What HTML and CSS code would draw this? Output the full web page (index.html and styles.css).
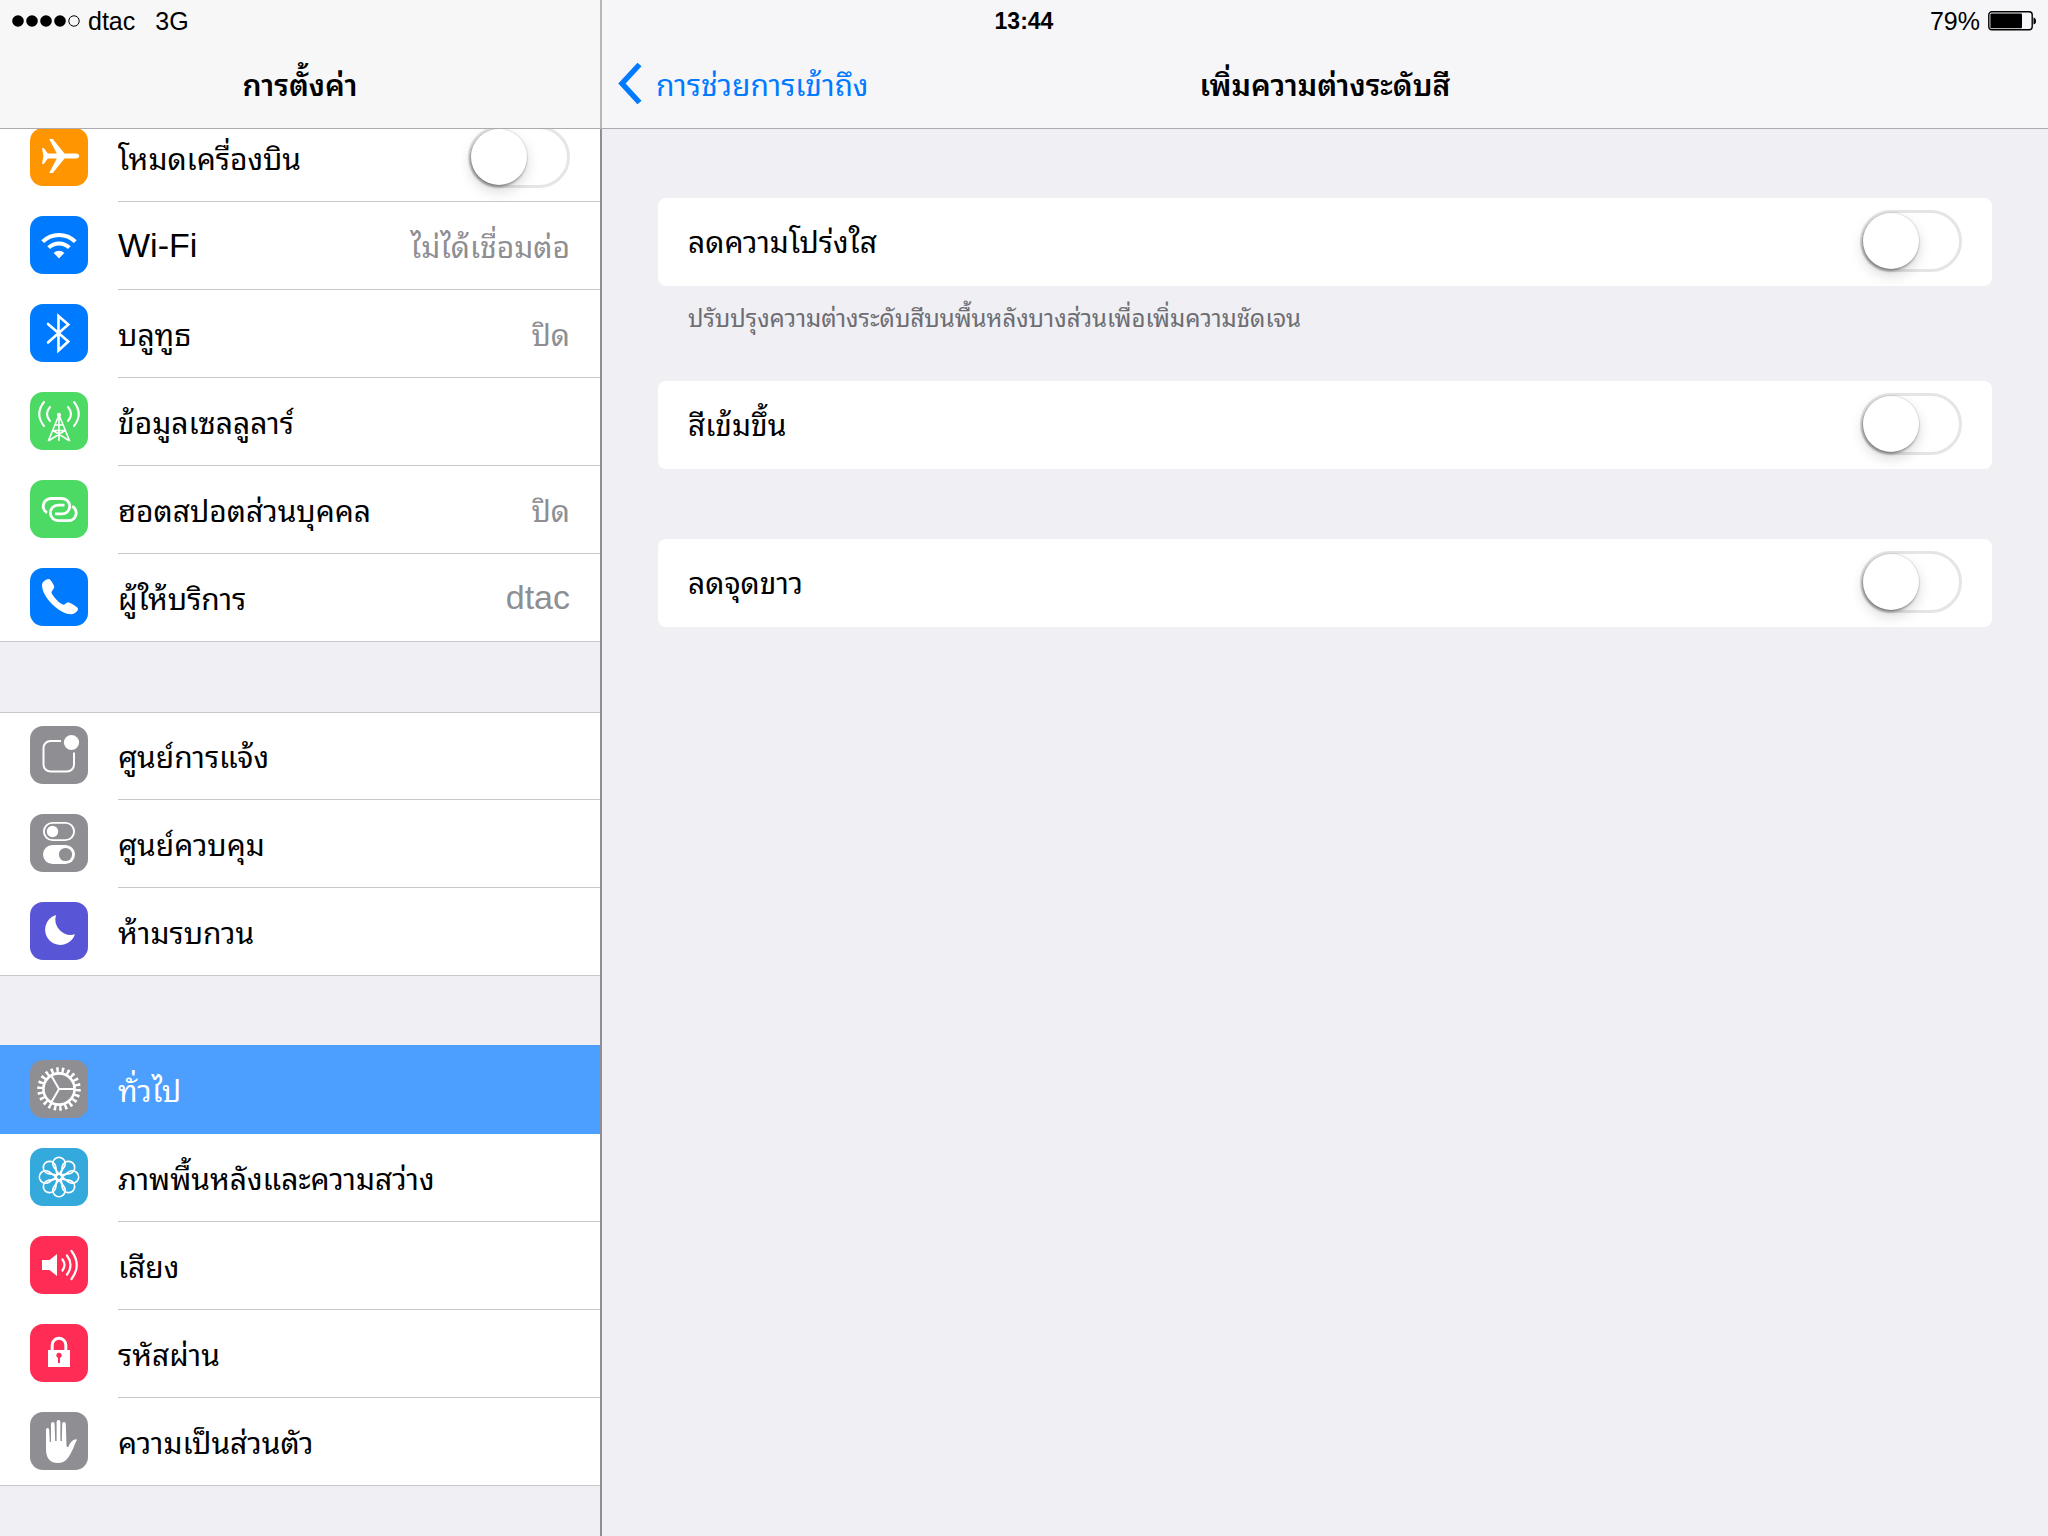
FILE: index.html
```
<!DOCTYPE html>
<html lang="th">
<head>
<meta charset="utf-8">
<meta name="viewport" content="width=device-width, initial-scale=1">
<title>การตั้งค่า</title>
<link rel="stylesheet" href="styles.css">
</head>
<body>
<div class="screen">
  <div class="status">
    <div class="status-left">
      <svg class="signal" width="68" height="12" viewBox="0 0 68 12" aria-hidden="true"><circle cx="6" cy="6" r="5.8"/><circle cx="20" cy="6" r="5.8"/><circle cx="34" cy="6" r="5.8"/><circle cx="48" cy="6" r="5.8"/><circle cx="62" cy="6" r="5.2" fill="none" stroke="#000"/></svg>
      <span>dtac</span>
      <span class="network">3G</span>
    </div>
    <time class="clock">13:44</time>
    <div class="status-right">
      <span>79%</span>
      <svg width="48" height="20" viewBox="0 0 48 20" aria-hidden="true"><rect x=".8" y=".8" width="43.400" height="18" rx="3" fill="none" stroke="#000" stroke-width="1.400"/><rect x="2.400" y="2.400" width="31.600" height="14.800" rx="1"/><path d="M45.500 6.500q2.500.500 2.500 3.500t-2.500 3.500z"/></svg>
    </div>
  </div>

  <nav class="sidebar">
    <header class="bar sidebar-bar"><h1 class="title">การตั้งค่า</h1></header>
    <div class="list">
      <ul class="group">
        <li><label class="row">
          <svg class="icon orange" viewBox="0 0 58 58"><path d="M12 20h1.800l4 5.400h9L19.200 11h3.600L34.500 25.400H46q3.200.400 3.200 2.600T46 30.600H34.500L22.800 45h-3.600l7.600-14.400h-9l-4 5.400H12l1.400-8z"/></svg>
          <span class="cell"><span class="label">โหมดเครื่องบิน</span><input class="switch" type="checkbox" role="switch"></span>
        </label></li>
        <li><a class="row" href="#wifi">
          <svg class="icon blue" viewBox="0 0 58 58"><path class="line" stroke-width="4" d="M12.700 25.700a23 23 0 0 1 32.600 0M18.700 31.700a14.500 14.500 0 0 1 20.600 0"/><path d="M23.700 36.900a7.500 7.500 0 0 1 10.600 0L29 42.400z"/></svg>
          <span class="cell"><span class="label latin">Wi-Fi</span><span class="value">ไม่ได้เชื่อมต่อ</span></span>
        </a></li>
        <li><a class="row" href="#bluetooth">
          <svg class="icon blue" viewBox="0 0 58 58"><path class="line round" stroke-width="2.600" d="M18 20l20.300 17.500-9.800 9V12l9.800 8.500L18 38.500"/></svg>
          <span class="cell"><span class="label">บลูทูธ</span><span class="value">ปิด</span></span>
        </a></li>
        <li><a class="row" href="#cellular">
          <svg class="icon green" viewBox="0 0 58 58"><g class="line round" stroke-width="1.600"><path d="M29 23L18.500 48.500M29 23l10.500 25.500M29 23v25.500M25.500 33h7M23 38.500l16 10M35 38.500l-16 10M23 38.500h12"/><path stroke-width="2.100" d="M20 15q-6 7 0 14M38 15q6 7 0 14M14 10q-9.500 12 0 24M44 10q9.500 12 0 24"/></g><circle cx="29" cy="22.800" r="2.100"/></svg>
          <span class="cell"><span class="label">ข้อมูลเซลลูลาร์</span></span>
        </a></li>
        <li><a class="row" href="#hotspot">
          <svg class="icon green" viewBox="0 0 58 58"><path class="line" stroke-width="2.800" d="M17 32.800C10.500 28.500 13 18.500 21.500 18.500H32a7.700 7.700 0 0 1 0 15.400h-7M34.500 25.200H28a7.700 7.700 0 0 0 0 15.400h10c8.500 0 11-10 4.300-14.300"/></svg>
          <span class="cell"><span class="label">ฮอตสปอตส่วนบุคคล</span><span class="value">ปิด</span></span>
        </a></li>
        <li><a class="row" href="#carrier">
          <svg class="icon blue" viewBox="0 0 58 58"><path d="M12 17c0-3 4-6 7-6 1.500 0 5 6 5.300 7.700.2 1.300-2.800 4.500-2.800 5.800.5 3.500 9 12 12 12.300 1.200.1 3-2.500 4.500-2.600 1.500 0 9.500 4.500 10 6.300.3 2.500-3.500 5.800-7 5.700C29 46 12 29 12 17z"/></svg>
          <span class="cell"><span class="label">ผู้ให้บริการ</span><span class="value latin">dtac</span></span>
        </a></li>
      </ul>
      <ul class="group">
        <li><a class="row" href="#notifications">
          <svg class="icon gray" viewBox="0 0 58 58"><path class="line" stroke-width="2" d="M31 15H20.500a7 7 0 0 0-7 7v16.500a7 7 0 0 0 7 7H37a7 7 0 0 0 7-7v-12"/><circle cx="41.500" cy="16.500" r="7.600"/></svg>
          <span class="cell"><span class="label">ศูนย์การแจ้ง</span></span>
        </a></li>
        <li><a class="row" href="#control">
          <svg class="icon gray" viewBox="0 0 58 58"><rect class="line" stroke-width="1.900" x="13.900" y="8.900" width="30.200" height="17.200" rx="8.600"/><circle cx="22.500" cy="17.500" r="5.700"/><rect x="13" y="31" width="32" height="19" rx="9.500"/><circle class="hole" cx="35.500" cy="40.500" r="6.600"/></svg>
          <span class="cell"><span class="label">ศูนย์ควบคุม</span></span>
        </a></li>
        <li><a class="row" href="#dnd">
          <svg class="icon purple" viewBox="0 0 58 58"><path d="M26 13a15.300 15.300 0 1 0 19 19.300A15.500 15.500 0 0 1 26 13z"/></svg>
          <span class="cell"><span class="label">ห้ามรบกวน</span></span>
        </a></li>
      </ul>
      <ul class="group">
        <li><a class="row selected" href="#general" aria-current="page">
          <svg class="icon gray" viewBox="0 0 58 58"><g class="line"><circle cx="29" cy="29" r="15.600" stroke-width="2.600"/><circle cx="29" cy="29" r="19" stroke-width="5.600" pathLength="44" stroke-dasharray=".9 1.100"/><path stroke-width="2" d="M29 29h15M29 29l-7.500-13M29 29l-7.500 13"/></g></svg>
          <span class="cell"><span class="label">ทั่วไป</span></span>
        </a></li>
        <li><a class="row" href="#wallpaper">
          <svg class="icon sky" viewBox="0 0 58 58"><defs><path id="petal" d="M29 26.200L23.800 19A6.200 6.200 0 1 1 34.200 19z"/></defs><g class="line" stroke-width="1.700"><use href="#petal"/><use href="#petal" transform="rotate(45 29 29)"/><use href="#petal" transform="rotate(90 29 29)"/><use href="#petal" transform="rotate(135 29 29)"/><use href="#petal" transform="rotate(180 29 29)"/><use href="#petal" transform="rotate(225 29 29)"/><use href="#petal" transform="rotate(270 29 29)"/><use href="#petal" transform="rotate(315 29 29)"/><circle cx="29" cy="29" r="3.200"/></g></svg>
          <span class="cell"><span class="label">ภาพพื้นหลังและความสว่าง</span></span>
        </a></li>
        <li><a class="row" href="#sounds">
          <svg class="icon red" viewBox="0 0 58 58"><path d="M12 24h7.500l7.500-6v22l-7.500-6H12z"/><path class="line round" stroke-width="2.200" d="M32.500 23.500q4 5.500 0 11M37 19.500q7 9.500 0 19M41.500 15q10.500 14 0 28"/></svg>
          <span class="cell"><span class="label">เสียง</span></span>
        </a></li>
        <li><a class="row" href="#passcode">
          <svg class="icon red" viewBox="0 0 58 58"><path class="line" stroke-width="3" d="M22.200 27v-6a6.800 6.800 0 0 1 13.600 0v6"/><path d="M18 26h22v17H18z"/><g class="hole"><circle cx="29" cy="31.300" r="2.600"/><path d="M28 32h2v7h-2z"/></g></svg>
          <span class="cell"><span class="label">รหัสผ่าน</span></span>
        </a></li>
        <li><a class="row" href="#privacy">
          <svg class="icon gray" viewBox="0 0 58 58"><path d="M16 18q0-2 1.600-2t1.600 2l.6 12h1.200V12q0-2 1.800-2t1.800 2l.6 17h1.400V10q0-2 1.900-2t1.900 2v19h1.400l.4-17q0-2 1.800-2t1.800 2l.7 22q.5 2 2 .5 2-5 5-6.500 2.500-1.500 3.500-.3-2 3.800-4 9C39 45 36 51 28 51q-11.500 0-12-13z"/></svg>
          <span class="cell"><span class="label">ความเป็นส่วนตัว</span></span>
        </a></li>
      </ul>
    </div>
  </nav>

  <main class="detail">
    <header class="bar detail-bar">
      <a class="back" href="#accessibility"><svg width="26" height="42" viewBox="0 0 26 42" aria-hidden="true"><path d="M23.500 2.500L6 21.500l17.500 19" fill="none" stroke="#007aff" stroke-width="5.500"/></svg>การช่วยการเข้าถึง</a>
      <h2 class="title">เพิ่มความต่างระดับสี</h2>
    </header>
    <form class="settings">
      <section>
        <label class="card"><span class="label">ลดความโปร่งใส</span><input class="switch" type="checkbox" role="switch"></label>
        <p class="note">ปรับปรุงความต่างระดับสีบนพื้นหลังบางส่วนเพื่อเพิ่มความชัดเจน</p>
      </section>
      <label class="card"><span class="label">สีเข้มขึ้น</span><input class="switch" type="checkbox" role="switch"></label>
      <label class="card spaced"><span class="label">ลดจุดขาว</span><input class="switch" type="checkbox" role="switch"></label>
    </form>
  </main>
</div>
</body>
</html>
```
FILE: styles.css
```
* { box-sizing: border-box; }

body {
  margin: 0;
  background: #efeff4;
  color: #000;
  font-family: "Noto Sans Thai Looped", "Liberation Sans", sans-serif;
  font-size: 30px;
}

a { color: inherit; text-decoration: none; }
ul { list-style: none; margin: 0; padding: 0; }

/* Two panes with the status bar laid over both headers */
.screen {
  display: grid;
  grid-template-columns: minmax(320px, 602px) 1fr;
  grid-template-rows: 42px 1fr;
  min-height: 100vh;
}

.status {
  grid-area: 1 / 1 / 2 / 3;
  z-index: 2;
  display: grid;
  grid-template-columns: 1fr auto 1fr;
  align-items: center;
  padding: 0 12px;
  font: 25px/42px "Liberation Sans", Arial, sans-serif;
}
.status-left, .status-right { display: flex; align-items: center; gap: 8px; }
.status-right { justify-content: flex-end; }
.network { margin-left: 12px; }
.clock { font-size: 23px; font-weight: bold; }

.sidebar, .detail { grid-row: 1 / 3; display: flex; flex-direction: column; min-width: 0; }
.sidebar { grid-column: 1; }
.detail { grid-column: 2; }

.bar {
  height: 129px;
  padding-top: 40px;
  padding-bottom: 2px;
  border-bottom: 1px solid #acacb0;
  display: grid;
  align-items: center;
}
.sidebar-bar { background: #f7f7f7; border-right: 2px solid #b8b8bb; }
.detail-bar { background: #f6f6f8; grid-template-columns: 1fr auto 1fr; padding-left: 14px; padding-right: 14px; }
.title { margin: 0; font-size: 30px; line-height: 56px; font-weight: 600; text-align: center; }
.back { display: flex; align-items: center; gap: 14px; color: #007aff; line-height: 56px; }

/* Sidebar list, scrolled a little under its header */
.list { flex: 1; overflow: hidden; border-right: 2px solid #8e8e93; }
.group { background: #fff; border: solid #c8c7cc; border-width: 1px 0; margin-bottom: 70px; }
.group:first-child { margin-top: -16px; }
.group:last-child { margin-bottom: 0; }
.row { display: flex; height: 88px; padding-left: 30px; }
.group li:last-child .row { height: 87px; }
.group:not(:first-child) li:first-child .row { height: 87px; }
.icon { flex: none; width: 58px; height: 58px; margin: 14px 30px 0 0; border-radius: 13px; fill: #fff; }
.group:not(:first-child) li:first-child .icon { margin-top: 13px; }
.cell {
  flex: 1;
  display: flex;
  align-items: center;
  justify-content: space-between;
  padding: 0 30px 2px 0;
  border-bottom: 1px solid #c8c7cc;
}
.group li:last-child .cell { border-bottom: 0; }
.value { color: #8e8e93; }
.label, .value { line-height: 60px; }
.latin { font-family: "Liberation Sans", Arial, sans-serif; font-size: 34px; line-height: 62px; }

.selected { background: #4c9fff; color: #fff; box-shadow: 0 -2px #4c9fff; }
.selected .cell { border-color: #4c9fff; }

.orange { background: #ff9500; }
.blue { background: #007aff; }
.green { background: #4cd964; }
.gray { background: #8e8e93; }
.purple { background: #5856d6; }
.sky { background: #34aadc; }
.red { background: #ff2d55; }
.line { fill: none; stroke: #fff; }
.round { stroke-linecap: round; }
.gray .hole { fill: #8e8e93; }
.red .hole { fill: #ff2d55; }

.switch {
  appearance: none;
  flex: none;
  width: 102px;
  height: 62px;
  margin: 0;
  border: 3px solid #e5e5e5;
  border-radius: 31px;
  background: #fff;
}
.switch::before {
  content: "";
  display: block;
  width: 56px;
  height: 56px;
  border-radius: 50%;
  background: #fff;
  box-shadow: 0 0 1px 1px rgba(0, 0, 0, .08), -1px 2px 3px rgba(0, 0, 0, .35), 0 6px 14px rgba(0, 0, 0, .16);
}
.switch:checked { background: #4cd964; border-color: #4cd964; }
.switch:checked::before { margin-left: 40px; }

.settings { display: flex; flex-direction: column; padding: 69px 56px; }
.card {
  display: flex;
  align-items: center;
  justify-content: space-between;
  height: 88px;
  padding: 0 30px 2px;
  border-radius: 8px;
  background: #fff;
}
.card .label { padding-bottom: 3px; }
.spaced { margin-top: 70px; }
.note { margin: 0; padding: 0 30px 35px; font-size: 24px; line-height: 60px; color: #6d6d72; }
```
